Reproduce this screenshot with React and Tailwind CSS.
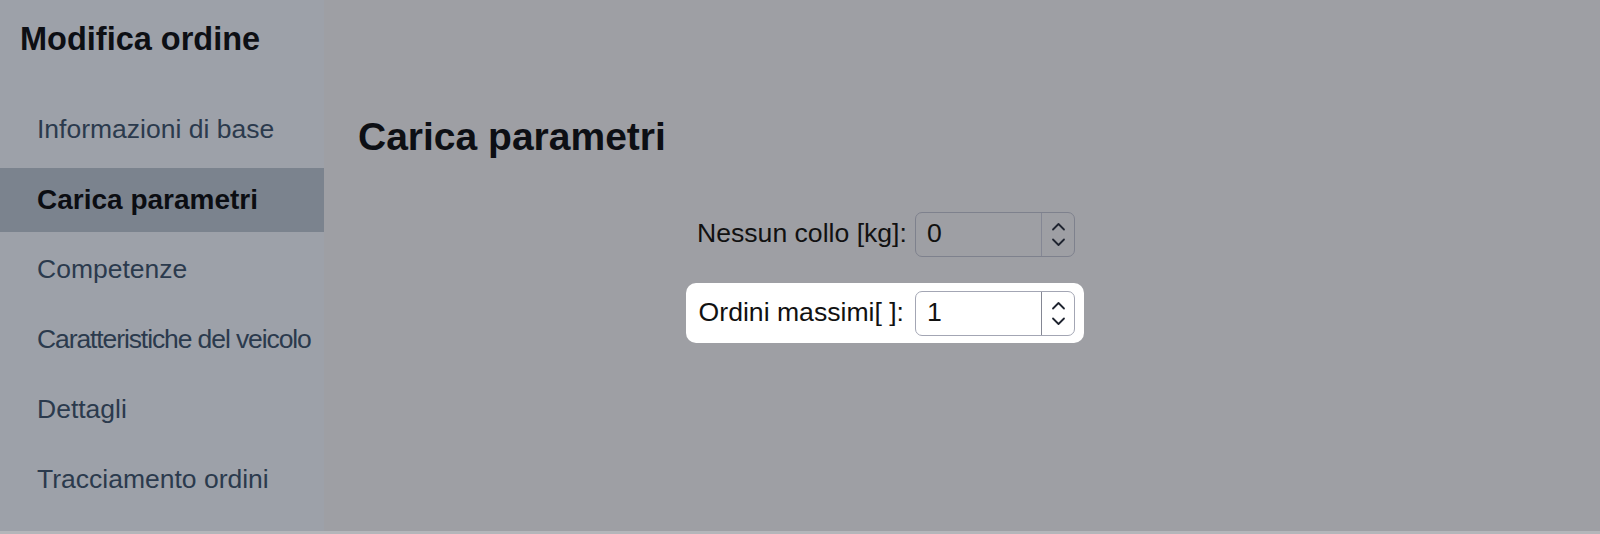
import React from "react";

const font = { fontFamily: '"Liberation Sans", Arial, sans-serif' };

const menu = [
  { label: "Informazioni di base" },
  { label: "Carica parametri", active: true },
  { label: "Competenze" },
  { label: "Caratteristiche del veicolo", tight: true },
  { label: "Dettagli" },
  { label: "Tracciamento ordini" },
];

function Spinner() {
  return (
    <div className="flex h-full w-[33px] flex-col items-center justify-center gap-[7px] border-l border-[#848794]">
      <svg width="15" height="9" viewBox="0 0 15 9" fill="none" stroke="#1f2430" strokeWidth="1.8" strokeLinecap="round" strokeLinejoin="round">
        <path d="M2 7.5L7.5 2 13 7.5" />
      </svg>
      <svg width="15" height="9" viewBox="0 0 15 9" fill="none" stroke="#1f2430" strokeWidth="1.8" strokeLinecap="round" strokeLinejoin="round">
        <path d="M2 1.5L7.5 7 13 1.5" />
      </svg>
    </div>
  );
}

function NumberField({ label, value, active = false }) {
  return (
    <div
      className={`flex h-[60px] w-fit items-center pl-[11px] pr-[9px] ${
        active ? "rounded-[10px] bg-white" : ""
      }`}
    >
      <span className="w-[207px] whitespace-nowrap text-right text-[26.6px] text-[#111]">{label}</span>
      <div
        className={`ml-[11px] flex h-[45px] w-[160px] items-center rounded-[7px] border ${
          active ? "border-[#a3a6b4] bg-white" : "border-[#7e818d]"
        }`}
      >
        <span className="flex-1 pl-[11px] text-[26.6px] text-[#111]">{value}</span>
        <Spinner />
      </div>
    </div>
  );
}

export default function App() {
  return (
    <div className="flex h-[534px] w-[1600px] flex-col overflow-hidden bg-[#9e9fa4]" style={font}>
      <div className="flex flex-1">
        <aside className="flex w-[324px] shrink-0 flex-col bg-[#9da1a9]">
          <h1 className="pt-[20px] pl-[20px] text-[32.5px] font-bold leading-[38px] text-[#0d0f14]">
            Modifica ordine
          </h1>
          <nav className="mt-[40px] flex flex-col gap-[6px]">
            {menu.map((item) => (
              <div
                key={item.label}
                className={`flex h-16 items-center whitespace-nowrap pl-[37px] ${
                  item.active
                    ? "bg-[#7b838e] text-[28px] font-bold text-[#0b0d12]"
                    : "text-[26.5px] text-[#2b3a4d]"
                } ${item.tight ? "tracking-[-1.1px]" : ""}`}
              >
                {item.label}
              </div>
            ))}
          </nav>
        </aside>

        <main className="flex-1 pl-[34px]">
          <h2 className="mt-[113px] text-[39px] font-bold leading-[47px] text-[#0d0f14]">
            Carica parametri
          </h2>
          <div className="ml-[328px] mt-[44px] flex flex-col gap-[19px]">
            <NumberField label="Nessun collo [kg]:" value="0" />
            <NumberField label="Ordini massimi[ ]:" value="1" active />
          </div>
        </main>
      </div>
      <div className="h-[3px] bg-[#b4b6ba]" />
    </div>
  );
}
